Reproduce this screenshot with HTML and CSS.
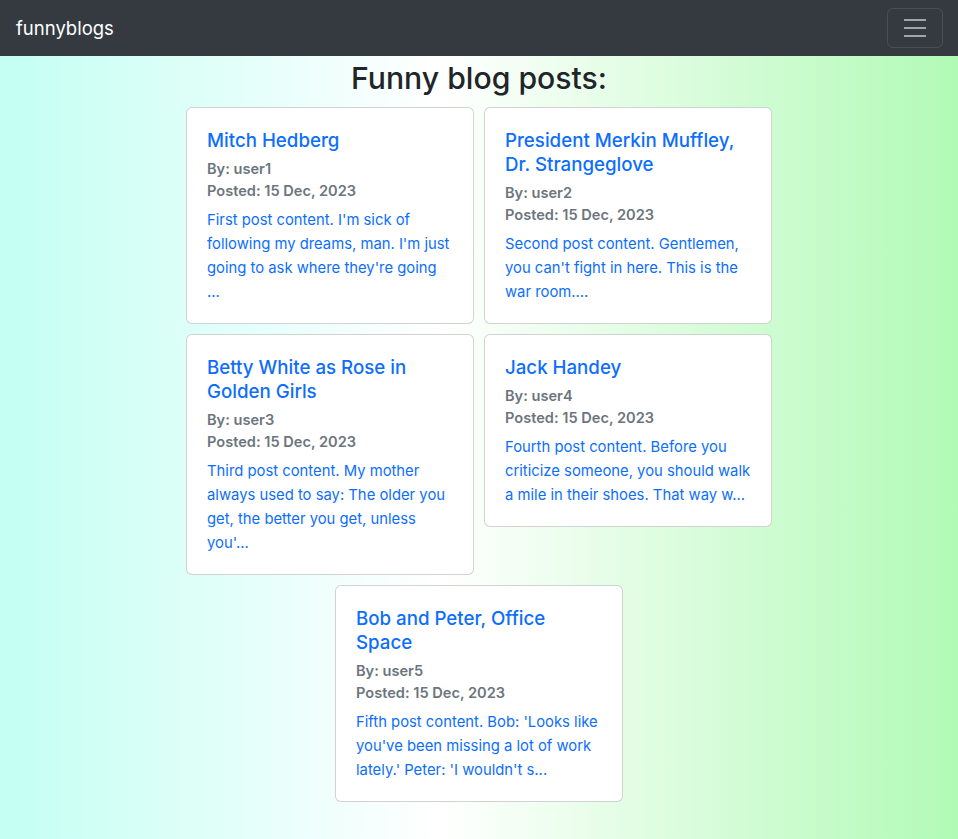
FILE: index.html
```html
<!DOCTYPE html>
<html lang="en">
<head>
<meta charset="utf-8">
<title>funnyblogs</title>
<link rel="stylesheet" href="styles.css">
</head>
<body>
<nav class="navbar">
  <a class="brand" href="#">funnyblogs</a>
  <button class="toggler" aria-label="Toggle navigation">
    <svg width="30" height="30" viewBox="0 0 30 30"><path d="M4 7h22M4 15h22M4 23h22" stroke="rgba(255,255,255,0.55)" stroke-width="2" stroke-linecap="butt"/></svg>
  </button>
</nav>
<main class="page">
  <h1 class="page-title">Funny blog posts:</h1>
  <div class="posts">
    <div class="card">
      <h5 class="card-title">Mitch Hedberg</h5>
      <h6 class="card-sub">By: user1</h6>
      <h6 class="card-sub">Posted: 15 Dec, 2023</h6>
      <p class="card-text">First post content. I'm sick of following my dreams, man. I'm just going to ask where they're going ...</p>
    </div>
    <div class="card">
      <h5 class="card-title">President Merkin Muffley, Dr. Strangeglove</h5>
      <h6 class="card-sub">By: user2</h6>
      <h6 class="card-sub">Posted: 15 Dec, 2023</h6>
      <p class="card-text">Second post content. Gentlemen, you can't fight in here. This is the war room....</p>
    </div>
    <div class="card">
      <h5 class="card-title">Betty White as Rose in Golden Girls</h5>
      <h6 class="card-sub">By: user3</h6>
      <h6 class="card-sub">Posted: 15 Dec, 2023</h6>
      <p class="card-text">Third post content. My mother always used to say: The older you get, the better you get, unless you'...</p>
    </div>
    <div class="card">
      <h5 class="card-title">Jack Handey</h5>
      <h6 class="card-sub">By: user4</h6>
      <h6 class="card-sub">Posted: 15 Dec, 2023</h6>
      <p class="card-text">Fourth post content. Before you criticize someone, you should walk a mile in their shoes. That way w...</p>
    </div>
    <div class="card">
      <h5 class="card-title">Bob and Peter, Office Space</h5>
      <h6 class="card-sub">By: user5</h6>
      <h6 class="card-sub">Posted: 15 Dec, 2023</h6>
      <p class="card-text">Fifth post content. Bob: 'Looks like you've been missing a lot of work lately.' Peter: 'I wouldn't s...</p>
    </div>
  </div>
</main>
</body>
</html>
```
FILE: styles.css
```css
* { box-sizing: border-box; }
html, body { margin: 0; padding: 0; }
body {
  font-family: Inter, Lato, "Noto Sans", sans-serif;
  font-size: 14.82px;
  color: #212529;
  min-height: 839px;
  background: linear-gradient(90deg, #c3fff3 0%, #ffffff 46%, #b1fab6 100%);
}
.navbar {
  height: 56px;
  background: #343a40;
  display: flex;
  align-items: center;
  justify-content: space-between;
  padding: 0 16px;
}
.brand {
  color: #fff;
  text-decoration: none;
  font-size: 18.5px;
  line-height: 30px;
}
.toggler {
  width: 56px;
  height: 40px;
  background: transparent;
  border: 1px solid rgba(255,255,255,0.1);
  border-radius: 6px;
  display: flex;
  align-items: center;
  justify-content: center;
  padding: 0;
  margin-right: -1px;
}
.toggler svg { display: block; }
.page {
  padding-top: 3px;
  padding-bottom: 38px;
}
.page-title {
  margin: 0 0 10px;
  text-align: center;
  font-size: 30.2px;
  font-weight: 500;
  line-height: 38px;
}
.posts {
  width: 596px;
  margin: 0 auto;
  display: flex;
  flex-wrap: wrap;
  justify-content: center;
  align-items: flex-start;
  gap: 10px;
}
.card {
  width: 288px;
  background: #fff;
  border: 1px solid rgba(0,0,0,0.175);
  border-radius: 6px;
  padding: 21px 20px 19px;
}
.card-title {
  margin: 0 0 5px;
  font-size: 18.7px;
  font-weight: 500;
  line-height: 24px;
  color: #0d6efd;
}
.card-sub {
  margin: 0;
  font-size: 14.6px;
  font-weight: 600;
  line-height: 22px;
  color: #6c757d;
}
.card-text {
  margin: 6px 0 0;
  font-size: 14.82px;
  line-height: 24px;
  color: #0d6efd;
}
```
